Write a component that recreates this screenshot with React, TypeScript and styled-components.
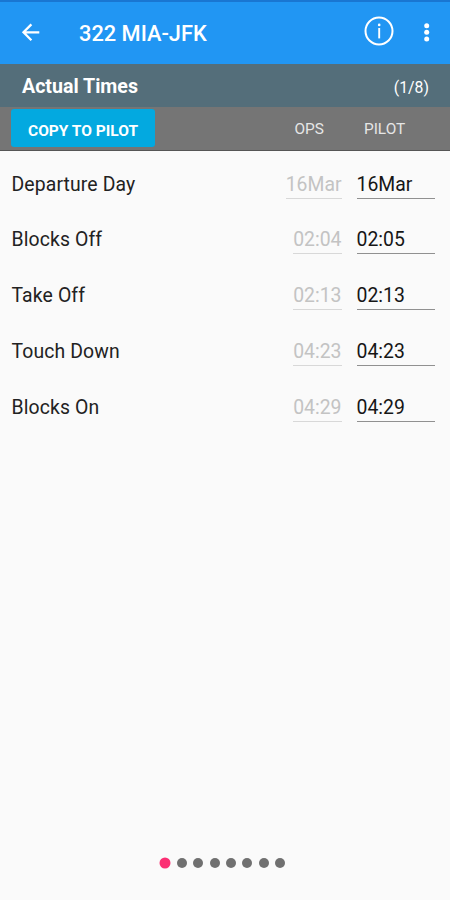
import React from "react";
import styled, { createGlobalStyle } from "styled-components";

const GlobalStyle = createGlobalStyle`
  * { box-sizing: border-box; }
  body { margin: 0; background: #fafafa; font-family: Roboto, "Liberation Sans", sans-serif; }
`;

const Screen = styled.div`
  width: 450px;
  height: 900px;
  display: flex;
  flex-direction: column;
  background: #fafafa;
  overflow: hidden;
`;

const StatusStrip = styled.div`
  height: 2px;
  flex: none;
  background: #1976d2;
`;

const AppBar = styled.header`
  height: 62px;
  flex: none;
  display: flex;
  align-items: center;
  padding: 0 20px 0 20px;
  background: #2196f3;
  color: #fff;
`;

const Title = styled.h1`
  flex: 1;
  margin: 0 0 0 38px;
  padding-top: 2px;
  font-size: 21.8px;
  line-height: 26px;
  font-weight: 500;
`;

const IconButton = styled.button<{ $w: number }>`
  width: ${(p) => p.$w}px;
  height: 32px;
  padding: 0;
  border: 0;
  background: none;
  color: inherit;
  display: flex;
  align-items: center;
  justify-content: center;
`;

const InfoButton = styled(IconButton)`
  margin: 0 30px 4px 0;
`;

const SectionBar = styled.div`
  height: 43px;
  flex: none;
  display: flex;
  align-items: center;
  justify-content: space-between;
  padding: 1px 21px 0 22px;
  background: #546e7a;
  color: #fff;
`;

const SectionTitle = styled.h2`
  margin: 0;
  padding-top: 2px;
  font-size: 19.6px;
  line-height: 24px;
  font-weight: 700;
`;

const PageCount = styled.span`
  font-size: 15.8px;
  line-height: 20px;
  padding-top: 3px;
`;

const ColumnBar = styled.div`
  height: 44px;
  flex: none;
  display: flex;
  align-items: flex-start;
  padding: 2px 0 0 11px;
  background: #757575;
  border-bottom: 1px solid #555;
  color: #e6e6e6;
`;

const CopyButton = styled.button`
  width: 144px;
  height: 38px;
  padding: 5px 0 0;
  border: 0;
  border-radius: 3px;
  background: #03a9e0;
  color: #fff;
  font: 700 15.5px/20px Roboto, sans-serif;
`;

const ColumnName = styled.span<{ $gap: number }>`
  margin-left: ${(p) => p.$gap}px;
  padding-top: 10px;
  font-size: 15.4px;
  line-height: 20px;
`;

const Rows = styled.main`
  flex: 1;
  padding-top: 14.5px;
`;

const Row = styled.div`
  height: 55.75px;
  display: grid;
  grid-template-columns: 1fr auto 78.5px;
  column-gap: 15px;
  align-items: start;
  padding: 0 15px 0 11.5px;
  font-size: 19.4px;
  line-height: 37px;
`;

const Label = styled.span`
  color: #222;
  letter-spacing: 0.12px;
`;

const Value = styled.span<{ $muted?: boolean }>`
  height: 33px;
  color: ${(p) => (p.$muted ? "#c3c3c3" : "#161616")};
  border-bottom: 1px solid ${(p) => (p.$muted ? "#d8d8d8" : "#909090")};
`;

const Pager = styled.nav`
  height: 75px;
  flex: none;
  display: flex;
  justify-content: center;
  align-items: center;
  gap: 6.4px;
  padding-right: 4.5px;
`;

const Dot = styled.span<{ $active: boolean }>`
  width: 10px;
  height: 10px;
  border-radius: 50%;
  background: ${(p) => (p.$active ? "#fb2f73" : "#707070")};
  transform: scale(${(p) => (p.$active ? 1.1 : 1)});
`;

const times = [
  ["Departure Day", "16Mar", "16Mar"],
  ["Blocks Off", "02:04", "02:05"],
  ["Take Off", "02:13", "02:13"],
  ["Touch Down", "04:23", "04:23"],
  ["Blocks On", "04:29", "04:29"],
];

const pages = [1, 2, 3, 4, 5, 6, 7, 8];

export default function App() {
  return (
    <Screen>
      <GlobalStyle />
      <StatusStrip />
      <AppBar>
        <IconButton $w={21} aria-label="Back">
          <svg width="20" height="20" viewBox="0 0 20 20" fill="none" stroke="#fff" strokeWidth="2.3">
            <path d="M18.3 9.3H2.5M10.4 1.4L2.5 9.3L10.4 17.2" />
          </svg>
        </IconButton>
        <Title>322 MIA-JFK</Title>
        <InfoButton $w={30} aria-label="Information">
          <svg width="30" height="30" viewBox="0 0 30 30" fill="none" stroke="#fff">
            <circle cx="15" cy="15" r="13.5" strokeWidth="2" />
            <path d="M15.2 12V22.4" strokeWidth="1.9" />
            <circle cx="15.2" cy="8.9" r="1.3" fill="#fff" stroke="none" />
          </svg>
        </InfoButton>
        <IconButton $w={6} aria-label="More options">
          <svg width="6" height="20" viewBox="0 0 6 20" fill="#fff">
            <circle cx="2.7" cy="2.7" r="2.5" />
            <circle cx="2.7" cy="9.3" r="2.5" />
            <circle cx="2.7" cy="15.9" r="2.5" />
          </svg>
        </IconButton>
      </AppBar>
      <SectionBar>
        <SectionTitle>Actual Times</SectionTitle>
        <PageCount>(1/8)</PageCount>
      </SectionBar>
      <ColumnBar>
        <CopyButton>COPY TO PILOT</CopyButton>
        <ColumnName $gap={139.5}>OPS</ColumnName>
        <ColumnName $gap={40}>PILOT</ColumnName>
      </ColumnBar>
      <Rows>
        {times.map(([label, ops, pilot]) => (
          <Row key={label}>
            <Label>{label}</Label>
            <Value $muted>{ops}</Value>
            <Value>{pilot}</Value>
          </Row>
        ))}
      </Rows>
      <Pager>
        {pages.map((page) => (
          <Dot key={page} $active={page === 1} />
        ))}
      </Pager>
    </Screen>
  );
}
